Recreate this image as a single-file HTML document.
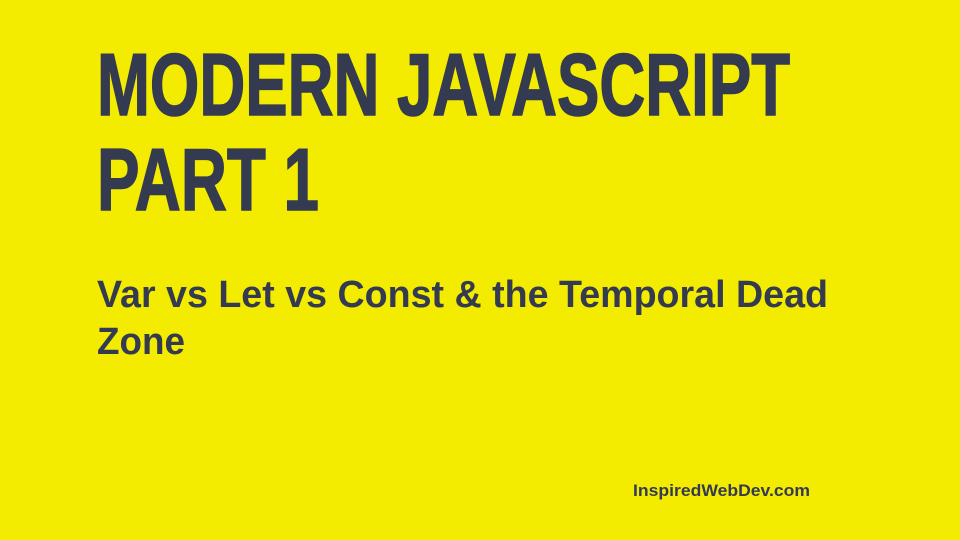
<!DOCTYPE html>
<html><head><meta charset="utf-8"><style>
html,body{margin:0;padding:0;background:#f3ec00;width:960px;height:540px;overflow:hidden}
svg{display:block}
</style></head><body>
<svg width="960" height="540" viewBox="0 0 960 540" xmlns="http://www.w3.org/2000/svg">
<rect width="960" height="540" fill="#f3ec00"/>
<g fill="#343a50" font-weight="bold">
<text x="97" y="115" font-family="Liberation Sans Narrow, Liberation Sans, sans-serif" font-size="88" textLength="693" lengthAdjust="spacingAndGlyphs" stroke="#343a50" stroke-width="1.5">MODERN JAVASCRIPT</text>
<text x="97" y="210" font-family="Liberation Sans Narrow, Liberation Sans, sans-serif" font-size="88" textLength="222" lengthAdjust="spacingAndGlyphs" stroke="#343a50" stroke-width="1.5">PART 1</text>
<text x="97" y="307" font-family="Liberation Sans, sans-serif" font-size="38" textLength="731" lengthAdjust="spacingAndGlyphs">Var vs Let vs Const &amp; the Temporal Dead</text>
<text x="97" y="354" font-family="Liberation Sans, sans-serif" font-size="38" textLength="88" lengthAdjust="spacingAndGlyphs">Zone</text>
<text x="633" y="496" font-family="Liberation Sans, sans-serif" font-size="17" textLength="177" lengthAdjust="spacingAndGlyphs">InspiredWebDev.com</text>
</g>
</svg>
</body></html>
